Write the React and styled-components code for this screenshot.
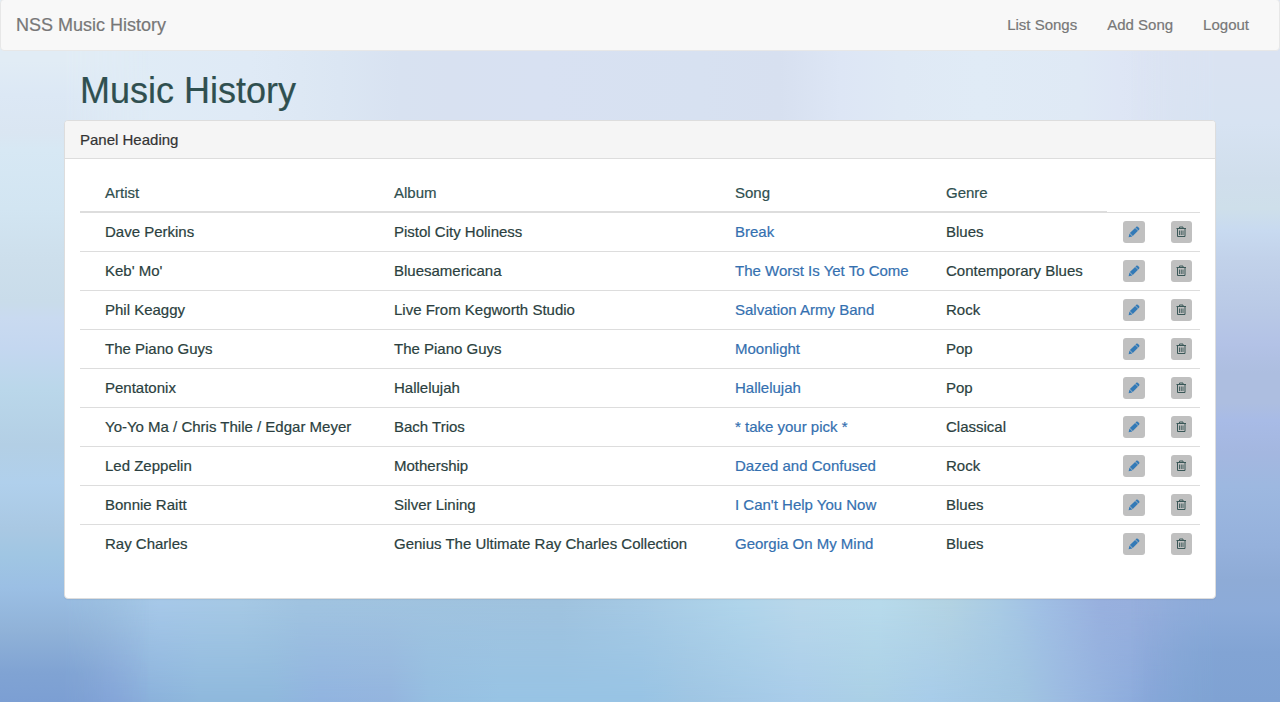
import React from 'react';
import styled, { createGlobalStyle } from 'styled-components';

const GlobalStyle = createGlobalStyle`
  *, *::before, *::after { box-sizing: border-box; }
  html, body { margin: 0; height: 100%; overflow: hidden; }
  body {
    font: 15px/20px "Liberation Sans", Arial, sans-serif;
    color: #333;
    -webkit-text-stroke: 0.2px currentColor;
  }
`;

const Page = styled.div`
  position: relative;
  isolation: isolate;
  height: 100vh;
  overflow: hidden;
  background:
    linear-gradient(90deg, #e1ecf5 0, #e0ecf6 120px, #dfeaf6 250px, #dde8f4 300px, #dbe6f3 340px, #d8e2f1 400px, #d8e1f1 450px, #d8e1f2 540px, #d7e1f1 700px, #d7e0f0 780px, #dde6f5 840px, #dfe9f5 900px, #e0ebf6 980px, #dfe9f5 1080px, #dee6f5 1120px, #dbe3f2 1180px, #d8e0f0 1280px) 0 0 / 100% 160px no-repeat,
    linear-gradient(90deg, #7ea1d3 0, #81a4d5 33px, #8baadd 110px, #8bb2dc 150px, #8fb9dd 200px, #8fb9dd 270px, #91b4e0 320px, #94b5df 390px, #96bfe2 430px, #98c4e5 500px, #98c4e5 640px, #9fc6e4 690px, #a9cdea 800px, #abd0e6 870px, #a8cdea 930px, #a1c6e2 1020px, #9bbae2 1070px, #8aa9dc 1150px, #84aad8 1200px, #7ea1d3 1280px);
`;

const BottomGlow = styled.div`
  position: absolute;
  z-index: -1;
  inset: 598px 0 0;
  background: linear-gradient(90deg, #98bae1 0, #9ec2de 80px, #a6c8e8 160px, #a5c8e4 240px, #a0c3e0 300px, #9fc2de 560px, #a5c9e4 640px, #afd4ea 740px, #b8d7ea 800px, #b7daeb 880px, #b2d2e2 950px, #a8cae4 1000px, #a0bfe4 1040px, #98b0de 1100px, #96aedc 1160px, #90acdb 1200px, #8aa8d8 1280px);
  mask-image: linear-gradient(#000 5%, transparent);
`;

const EdgeGlow = styled.div`
  position: absolute;
  z-index: -1;
  top: 0;
  bottom: 0;
  ${(p) => p.$side}: 0;
  width: 150px;
  background: ${(p) => p.$side === 'left'
    ? 'linear-gradient(#e1ecf5 61px, #dce8f5 95px, #dae6f2 133px, #d7e8f4 150px, #d2e5f2 209px, #cddfec 259px, #c9dcea 302px, #c9daf0 318px, #c4d7f0 348px, #bad7ea 390px, #b3cfe5 445px, #b0d0ec 483px, #a9c8e3 529px, #a0c6e3 555px, #9bbfe4 588px, #90b2d8 631px, #80a3d3 673px, #7c9fd3 702px)'
    : 'linear-gradient(#dae3f2 61px, #d7e3f2 124px, #d0deec 179px, #cedfea 209px, #c8daf0 230px, #c2d2ea 259px, #b9c9e6 310px, #b3c2e6 344px, #adbee0 373px, #adbee0 403px, #a8bbe6 420px, #a4b7e0 453px, #9db8e0 487px, #95b1dc 546px, #8eabd6 580px, #8cabd9 610px, #82a4d4 652px, #7fa2d3 702px)'};
  mask-image: linear-gradient(to ${(p) => (p.$side === 'left' ? 'right' : 'left')}, #000 65px, transparent);
`;

const Navbar = styled.nav`
  display: flex;
  justify-content: space-between;
  align-items: center;
  height: 52px;
  margin-top: -1px;
  padding: 0 15px;
  background: #f8f8f8;
  border: 1px solid #e7e7e7;
  border-radius: 4px;
`;

const Brand = styled.a`
  font-size: 18px;
  color: #777;
`;

const NavLinks = styled.div`
  display: flex;
  gap: 30px;
  padding-right: 15px;
`;

const NavLink = styled.a`
  color: #777;
`;

const Container = styled.main`
  width: 90%;
  margin: 0 auto;
`;

const Title = styled.h1`
  margin: 20px 0 9px;
  padding-left: 16px;
  font-size: 36px;
  line-height: 40px;
  font-weight: 400;
  color: #2f4f4f;
`;

const Panel = styled.section`
  height: 479px;
  background: #fff;
  border: 1px solid #ddd;
  border-radius: 4px;
  box-shadow: 0 1px 1px rgba(0, 0, 0, 0.05);
`;

const PanelHeading = styled.header`
  height: 38px;
  padding: 9px 15px 8px;
  background: #f5f5f5;
  border-bottom: 1px solid #ddd;
  border-radius: 3px 3px 0 0;
`;

const PanelBody = styled.div`
  padding: 15px;
`;

const Table = styled.table`
  width: 100%;
  table-layout: fixed;
  border-spacing: 0;
`;

const Col = styled.col`
  width: ${(p) => p.$width}px;
`;

const HeadCell = styled.th`
  height: 38px;
  padding: 0 0 0 25px;
  border-bottom: 1px solid #ddd;
  text-align: left;
  font-weight: 400;
  color: #2f4f4f;
`;

const Cell = styled.td`
  height: 39px;
  padding: 0 0 0 ${(p) => (p.$action ? 16 : 25)}px;
  border-top: 1px solid #ddd;
  white-space: nowrap;
  color: #2b3f40;
`;

const SongLink = styled.a`
  color: #3470b0;
`;

const IconButton = styled.button`
  display: flex;
  align-items: center;
  justify-content: center;
  width: ${(p) => p.$width}px;
  height: 22px;
  padding: 0;
  border: 0;
  border-radius: 3px;
  background: #c0c0c0;
  color: ${(p) => p.$color};
`;

const PencilIcon = () => (
  <svg width="12" height="12" viewBox="0 0 12 12" fill="currentColor">
    <path d="M7.5 1.5 8.2.8q.8-.7 1.6 0l1.3 1.3q.7.8 0 1.6l-.7.7zM7.1 1.9 10 4.8 4.8 10 1.9 7.1zM1.5 7.5l2.9 2.9-3.8.9z" />
  </svg>
);

const TrashIcon = () => (
  <svg width="11" height="12" viewBox="0 0 11 12" fill="none" stroke="currentColor" opacity="0.92">
    <path d="M.5 2.5h9.5M3.5 2V1h3.5v1M1.5 3v7.5h7.5V3" />
    <path d="M3.5 4.5v4.5M5.25 4.5v4.5M7 4.5v4.5" strokeWidth="0.9" />
  </svg>
);

const songs = [
  ['Dave Perkins', 'Pistol City Holiness', 'Break', 'Blues'],
  ["Keb' Mo'", 'Bluesamericana', 'The Worst Is Yet To Come', 'Contemporary Blues'],
  ['Phil Keaggy', 'Live From Kegworth Studio', 'Salvation Army Band', 'Rock'],
  ['The Piano Guys', 'The Piano Guys', 'Moonlight', 'Pop'],
  ['Pentatonix', 'Hallelujah', 'Hallelujah', 'Pop'],
  ['Yo-Yo Ma / Chris Thile / Edgar Meyer', 'Bach Trios', '* take your pick *', 'Classical'],
  ['Led Zeppelin', 'Mothership', 'Dazed and Confused', 'Rock'],
  ['Bonnie Raitt', 'Silver Lining', "I Can't Help You Now", 'Blues'],
  ['Ray Charles', 'Genius The Ultimate Ray Charles Collection', 'Georgia On My Mind', 'Blues'],
];

export default function App() {
  return (
    <Page>
      <GlobalStyle />
      <BottomGlow />
      <EdgeGlow $side="left" />
      <EdgeGlow $side="right" />
      <Navbar>
        <Brand>NSS Music History</Brand>
        <NavLinks>
          <NavLink>List Songs</NavLink>
          <NavLink>Add Song</NavLink>
          <NavLink>Logout</NavLink>
        </NavLinks>
      </Navbar>
      <Container>
        <Title>Music History</Title>
        <Panel>
          <PanelHeading>Panel Heading</PanelHeading>
          <PanelBody>
            <Table>
              <colgroup>
                {[289, 341, 211, 186, 48, 45].map((w, i) => <Col key={i} $width={w} />)}
              </colgroup>
              <thead>
                <tr>
                  {['Artist', 'Album', 'Song', 'Genre'].map((h) => <HeadCell key={h}>{h}</HeadCell>)}
                </tr>
              </thead>
              <tbody>
                {songs.map(([artist, album, song, genre]) => (
                  <tr key={song}>
                    <Cell>{artist}</Cell>
                    <Cell>{album}</Cell>
                    <Cell><SongLink>{song}</SongLink></Cell>
                    <Cell>{genre}</Cell>
                    <Cell $action>
                      <IconButton $width={22} $color="#337ab7" aria-label="Edit"><PencilIcon /></IconButton>
                    </Cell>
                    <Cell $action>
                      <IconButton $width={21} $color="#2f4f4f" aria-label="Delete"><TrashIcon /></IconButton>
                    </Cell>
                  </tr>
                ))}
              </tbody>
            </Table>
          </PanelBody>
        </Panel>
      </Container>
    </Page>
  );
}
